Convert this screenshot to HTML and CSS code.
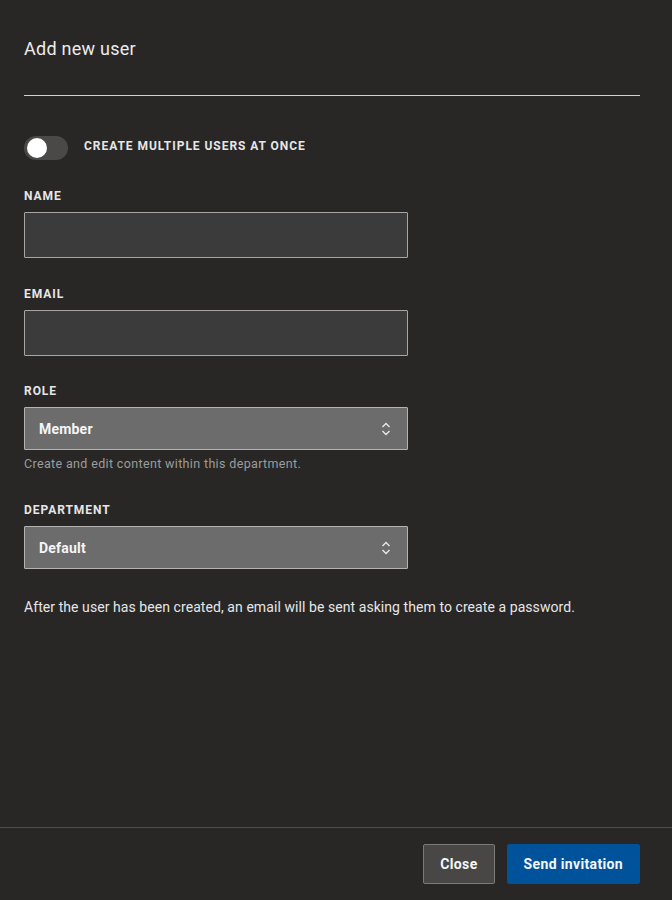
FILE: index.html
```html
<!DOCTYPE html>
<html lang="en">
<head>
<meta charset="utf-8">
<title>Add new user</title>
<link rel="stylesheet" href="styles.css">
</head>
<body>
<div class="modal">
  <div class="content">
    <h1 class="title">Add new user</h1>
    <hr class="divider">
    <label class="toggle-row">
      <span class="toggle"><span class="knob"></span></span>
      <span class="toggle-label">CREATE MULTIPLE USERS AT ONCE</span>
    </label>
    <div class="field">
      <div class="label">NAME</div>
      <div class="input"></div>
    </div>
    <div class="field">
      <div class="label">EMAIL</div>
      <div class="input"></div>
    </div>
    <div class="field field-select">
      <div class="label">ROLE</div>
      <div class="select"><span>Member</span>
        <svg class="chev" width="10" height="14" viewBox="0 0 10 14"><path d="M1.5 5 L5 1.5 L8.5 5" fill="none" stroke="#e8e8e8" stroke-width="1.4"/><path d="M1.5 9 L5 12.5 L8.5 9" fill="none" stroke="#e8e8e8" stroke-width="1.4"/></svg>
      </div>
      <div class="help">Create and edit content within this department.</div>
    </div>
    <div class="field">
      <div class="label">DEPARTMENT</div>
      <div class="select"><span>Default</span>
        <svg class="chev" width="10" height="14" viewBox="0 0 10 14"><path d="M1.5 5 L5 1.5 L8.5 5" fill="none" stroke="#e8e8e8" stroke-width="1.4"/><path d="M1.5 9 L5 12.5 L8.5 9" fill="none" stroke="#e8e8e8" stroke-width="1.4"/></svg>
      </div>
    </div>
    <p class="note">After the user has been created, an email will be sent asking them to create a password.</p>
  </div>
  <div class="footer">
    <button class="btn btn-secondary">Close</button>
    <button class="btn btn-primary">Send invitation</button>
  </div>
</div>
</body>
</html>
```

FILE: styles.css
```css
* { box-sizing: border-box; }
html, body { margin: 0; padding: 0; }
body {
  background: #282726;
  color: #f2f2f2;
  font-family: Roboto, "Liberation Sans", sans-serif;
}
.modal {
  min-height: 100vh;
  display: flex;
  flex-direction: column;
}
.content {
  flex: 1;
  padding: 37px 32px 0 24px;
}
.title {
  margin: 0;
  font-size: 18px;
  font-weight: 400;
  line-height: 24px;
  letter-spacing: 0.25px;
  color: #ececec;
}
.divider {
  margin: 34px 0 0 0;
  border: 0;
  border-top: 1px solid #d0d0d0;
  height: 0;
}
.toggle-row {
  display: flex;
  align-items: center;
  gap: 16px;
  margin-top: 40px;
}
.toggle {
  width: 44px;
  height: 24px;
  border-radius: 12px;
  background: #4a4948;
  display: flex;
  align-items: center;
  padding: 2px 3px;
}
.knob {
  width: 20px;
  height: 20px;
  border-radius: 50%;
  background: #ffffff;
}
.toggle-label {
  font-size: 12px;
  font-weight: 700;
  letter-spacing: 0.95px;
  color: #e6e6e6;
  padding-bottom: 5px;
}
.field { margin-top: 28px; }
.field-select { margin-top: 27px; }
.label {
  font-size: 12px;
  font-weight: 700;
  letter-spacing: 0.95px;
  color: #e6e6e6;
  line-height: 16px;
  margin-bottom: 8px;
}
.input {
  width: 384px;
  height: 46px;
  background: #3b3b3b;
  border: 1px solid #a6a6a6;
  border-radius: 1px;
}
.select {
  width: 384px;
  height: 43px;
  background: #6c6c6c;
  border: 1px solid #b3b3b3;
  border-radius: 1px;
  display: flex;
  align-items: center;
  justify-content: space-between;
  padding: 0 16px 0 14px;
  font-size: 14px;
  font-weight: 700;
  letter-spacing: 0.2px;
  color: #f5f5f5;
}
.chev { display: block; }
.help {
  margin-top: 6px;
  padding-bottom: 2px;
  font-size: 12.5px;
  letter-spacing: 0.35px;
  line-height: 16px;
  color: #9c9c9c;
}
.note {
  margin: 28px 0 0 0;
  font-size: 14px;
  line-height: 20px;
  letter-spacing: 0.07px;
  color: #e6e6e6;
}
.footer {
  border-top: 1px solid #4e4d4c;
  height: 73px;
  display: flex;
  justify-content: flex-end;
  align-items: center;
  gap: 12px;
  padding: 0 32px 0 24px;
}
.btn {
  height: 40px;
  font-family: inherit;
  font-size: 14px;
  font-weight: 700;
  letter-spacing: 0.35px;
  color: #f5f5f5;
  border-radius: 2px;
  padding: 0 16px;
  cursor: pointer;
}
.btn-secondary {
  background: #484746;
  border: 1px solid #7a7a7a;
}
.btn-primary {
  background: #00539a;
  border: 1px solid #00539a;
}
```
